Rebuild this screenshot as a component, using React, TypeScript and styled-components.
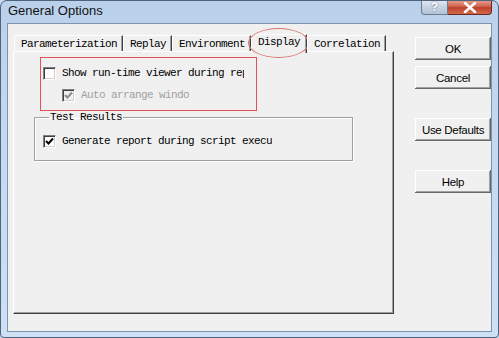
import { styled, createGlobalStyle } from 'styled-components';

const GlobalStyle = createGlobalStyle`
  html, body {
    margin: 0;
    padding: 0;
    background: #c6daf0;
  }
  * {
    box-sizing: border-box;
  }
`;

const tabs = ['Parameterization', 'Replay', 'Environment', 'Display', 'Correlation'];

export default function App() {
  return (
    <>
      <GlobalStyle />
      <Window>
        <TitleBar>
          <Title>General Options</Title>
          <Controls>
            <HelpControl>?</HelpControl>
            <CloseControl>
              <svg width="14" height="11" viewBox="0 0 14 11">
                <path d="M2 1 L12 10 M12 1 L2 10" stroke="#fff" strokeWidth="2.6" strokeLinecap="round" />
              </svg>
            </CloseControl>
          </Controls>
        </TitleBar>
        <Client>
          <TabArea>
            <TabStrip>
              {tabs.map((tab) => (
                <Tab key={tab} $active={tab === 'Display'}>
                  {tab}
                  {tab === 'Display' && <Ellipse />}
                </Tab>
              ))}
            </TabStrip>
            <Panel>
              <Highlight>
                <CheckRow>
                  <CheckBox />
                  <Label $clip={182}>Show run-time viewer during replay</Label>
                </CheckRow>
                <CheckRow $indent>
                  <CheckBox $checked $disabled />
                  <Label $clip={108} $disabled>Auto arrange windows</Label>
                </CheckRow>
              </Highlight>
              <GroupBox>
                <Legend>Test Results</Legend>
                <CheckRow>
                  <CheckBox $checked />
                  <Label $clip={210}>Generate report during script execution</Label>
                </CheckRow>
              </GroupBox>
            </Panel>
          </TabArea>
          <ButtonColumn>
            <Button>OK</Button>
            <Button>Cancel</Button>
            <Button $gapBefore>Use Defaults</Button>
            <Button $gapBefore>Help</Button>
          </ButtonColumn>
        </Client>
      </Window>
    </>
  );
}

const CheckBox = ({ $checked, $disabled }: { $checked?: boolean; $disabled?: boolean }) => (
  <Box $disabled={$disabled}>
    {$checked && (
      <svg width="9" height="9" viewBox="0 0 9 9">
        <path
          d="M1 4 L3.5 6.5 L8 1.5"
          fill="none"
          stroke={$disabled ? '#8d8d8d' : '#000'}
          strokeWidth="2"
        />
      </svg>
    )}
  </Box>
);

const Window = styled.div`
  width: 499px;
  height: 338px;
  display: flex;
  flex-direction: column;
  background: linear-gradient(180deg, #b9d1ea 0%, #c4d9f0 40%, #cde0f4 100%);
  border: 1px solid #50637c;
  border-radius: 7px 7px 4px 4px;
  overflow: hidden;
`;

const TitleBar = styled.div`
  height: 22px;
  display: flex;
  justify-content: space-between;
  align-items: flex-start;
  padding-left: 7px;
`;

const Title = styled.span`
  font-family: 'Liberation Sans', Arial, sans-serif;
  font-size: 13px;
  color: #111;
  line-height: 18px;
  margin-top: 1px;
`;

const Controls = styled.div`
  display: flex;
  margin-right: 6px;
  margin-top: -1px;
`;

const HelpControl = styled.div`
  width: 27px;
  height: 15px;
  border: 1px solid #6d7b90;
  border-top: none;
  border-radius: 0 0 0 4px;
  background: linear-gradient(180deg, #e3ebf5 0%, #c6d3e2 50%, #b3c3d7 100%);
  font-family: 'Liberation Sans', Arial, sans-serif;
  font-weight: bold;
  font-size: 12px;
  line-height: 14px;
  color: #fff;
  text-shadow: 0 0 2px #56667c;
  text-align: center;
`;

const CloseControl = styled.div`
  width: 44px;
  height: 15px;
  border: 1px solid #6d2a25;
  border-top: none;
  border-left: none;
  border-radius: 0 0 4px 0;
  background: linear-gradient(180deg, #e8a493 0%, #d0654f 45%, #c0402c 55%, #d26a4a 100%);
  display: flex;
  align-items: center;
  justify-content: center;
`;

const Client = styled.div`
  flex: 1;
  margin: 0 6px 5px 6px;
  background: #f0f0f0;
  border: 1px solid #7e93ad;
  display: flex;
  padding: 9px 0 0 5px;
`;

const TabArea = styled.div`
  width: 381px;
  height: 281px;
  display: flex;
  flex-direction: column;
`;

const TabStrip = styled.div`
  display: flex;
  align-items: flex-end;
  padding-left: 1px;
  height: 18px;
  position: relative;
  z-index: 1;
`;

const Tab = styled.div<{ $active?: boolean }>`
  position: relative;
  font-family: 'Liberation Mono', 'DejaVu Sans Mono', monospace;
  font-size: 11px;
  letter-spacing: -0.6px;
  color: #000;
  background: #f0f0f0;
  height: ${(p) => (p.$active ? '19px' : '16px')};
  line-height: ${(p) => (p.$active ? '15px' : '16px')};
  padding: 0 ${(p) => (p.$active ? '6px' : '5px')} 0 6px;
  margin-bottom: ${(p) => (p.$active ? '-2px' : '0')};
  border-top: 1px solid #fff;
  border-left: 1px solid #fff;
  box-shadow: inset -1px 0 #a0a0a0;
  border-right: 1px solid #404040;
  white-space: nowrap;
`;

const Ellipse = styled.div`
  position: absolute;
  left: -4px;
  right: -3px;
  top: -7px;
  height: 30px;
  border: 1px solid #d9756f;
  border-radius: 50%;
  pointer-events: none;
`;

const Panel = styled.div`
  flex: 1;
  background: #f0f0f0;
  border-top: 1px solid #fff;
  border-left: 1px solid #fff;
  border-right: 1px solid #404040;
  border-bottom: 1px solid #404040;
  box-shadow: inset -1px -1px #a0a0a0;
  padding: 5px 0 0 20px;
  display: flex;
  flex-direction: column;
  align-items: flex-start;
`;

const Highlight = styled.div`
  width: 217px;
  height: 54px;
  margin-left: 6px;
  border: 1px solid #e0535a;
  padding: 8px 0 0 2px;
  display: flex;
  flex-direction: column;
  gap: 8px;
  overflow: hidden;
`;

const CheckRow = styled.div<{ $indent?: boolean }>`
  display: flex;
  align-items: center;
  gap: 6px;
  margin-left: ${(p) => (p.$indent ? '19px' : '0')};
  white-space: nowrap;
`;

const Box = styled.div<{ $disabled?: boolean }>`
  width: 13px;
  height: 13px;
  flex: none;
  background: ${(p) => (p.$disabled ? '#f0f0f0' : '#fff')};
  border-top: 1px solid #808080;
  border-left: 1px solid #808080;
  border-right: 1px solid #fff;
  border-bottom: 1px solid #fff;
  box-shadow: inset 1px 1px #404040, inset -1px -1px #d4d0c8;
  display: flex;
  align-items: center;
  justify-content: center;
`;

const Label = styled.span<{ $disabled?: boolean; $clip: number }>`
  display: inline-block;
  width: ${(p) => p.$clip}px;
  overflow: hidden;
  font-family: 'Liberation Mono', 'DejaVu Sans Mono', monospace;
  font-size: 11px;
  letter-spacing: -0.6px;
  color: ${(p) => (p.$disabled ? '#a0a0a0' : '#000')};
  line-height: 14px;
`;

const GroupBox = styled.fieldset`
  width: 319px;
  height: 50px;
  margin: 0;
  padding: 11px 0 0 8px;
  border: 1px solid #a0a0a0;
  box-shadow: 1px 1px #fff, inset 1px 1px #fff;
  border-radius: 0;
`;

const Legend = styled.legend`
  font-family: 'Liberation Mono', 'DejaVu Sans Mono', monospace;
  font-size: 11px;
  letter-spacing: -0.6px;
  color: #000;
  padding: 0 1px;
  margin-left: 6px;
`;

const ButtonColumn = styled.div`
  display: flex;
  flex-direction: column;
  gap: 6px;
  margin-left: 21px;
  padding-top: 4px;
`;

const Button = styled.button<{ $gapBefore?: boolean }>`
  width: 76px;
  height: 23px;
  margin-top: ${(p) => (p.$gapBefore ? '23px' : '0')};
  background: #f0f0f0;
  border: none;
  box-shadow: inset -1px -1px #696969, inset 1px 1px #fff, inset -2px -2px #a0a0a0, inset 2px 2px #f0f0f0;
  font-family: 'Liberation Sans', Arial, sans-serif;
  font-size: 11.5px;
  letter-spacing: -0.3px;
  color: #000;
  padding: 0;
`;
